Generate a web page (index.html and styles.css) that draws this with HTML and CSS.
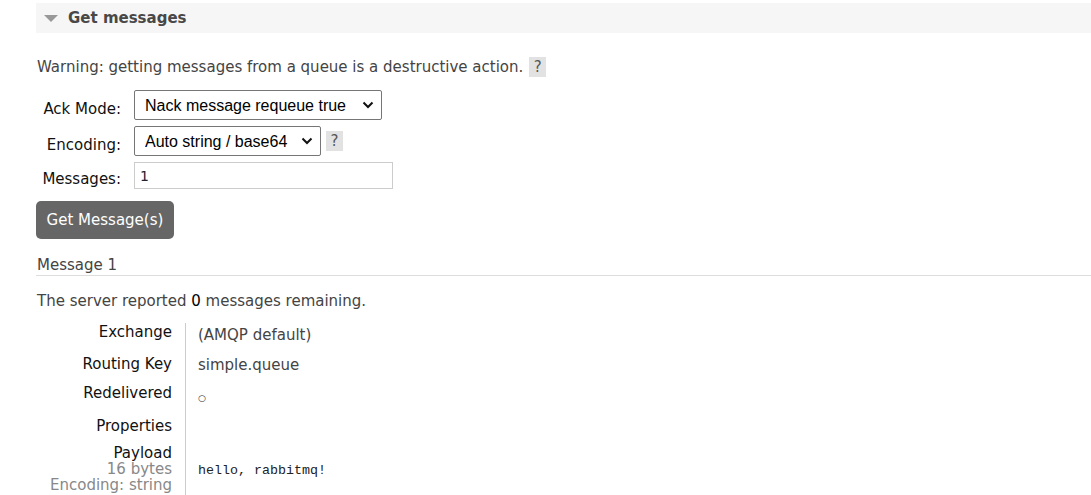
FILE: index.html
```html
<!DOCTYPE html>
<html>
<head>
<meta charset="utf-8">
<link rel="stylesheet" href="styles.css">
</head>
<body>
<div class="page">
  <div class="section-head">
    <span class="triangle"></span>
    <h2>Get messages</h2>
  </div>
  <div class="section-body">
    <p class="warning">Warning: getting messages from a queue is a destructive action. <span class="help">?</span></p>
    <div class="form">
      <label class="flabel">Ack Mode:</label>
      <div class="fctl">
        <span class="selwrap">
          <select class="sel sel-ack">
            <option>Nack message requeue true</option>
          </select>
          <svg class="chev" width="12" height="8" viewBox="0 0 12 8"><polyline points="1.5,1.5 6,6 10.5,1.5" fill="none" stroke="#111" stroke-width="2"/></svg>
        </span>
      </div>
      <label class="flabel">Encoding:</label>
      <div class="fctl">
        <span class="selwrap">
          <select class="sel sel-enc">
            <option>Auto string / base64</option>
          </select>
          <svg class="chev" width="12" height="8" viewBox="0 0 12 8"><polyline points="1.5,1.5 6,6 10.5,1.5" fill="none" stroke="#111" stroke-width="2"/></svg>
        </span>
        <span class="help">?</span>
      </div>
      <label class="flabel">Messages:</label>
      <div class="fctl">
        <input class="txt" type="text" value="1">
      </div>
    </div>
    <button class="btn">Get Message(s)</button>

    <div class="msg-title">Message 1</div>
    <p class="remaining">The server reported <span class="num">0</span> messages remaining.</p>

    <table class="facts">
      <tr class="r1"><th>Exchange</th><td>(AMQP default)</td></tr>
      <tr class="r2"><th>Routing Key</th><td>simple.queue</td></tr>
      <tr class="r3"><th>Redelivered</th><td><span class="circle">○</span></td></tr>
      <tr class="r4"><th>Properties</th><td></td></tr>
      <tr class="r5"><th>Payload<br><span class="sub">16 bytes</span><br><span class="sub">Encoding: string</span></th><td class="mid"><pre>hello, rabbitmq!</pre></td></tr>
    </table>
  </div>
</div>
</body>
</html>
```

FILE: styles.css
```css
html, body {
  margin: 0;
  padding: 0;
  background: #fff;
}
body {
  font-family: "DejaVu Sans", Verdana, sans-serif;
  font-size: 15px;
  color: #444;
  overflow: hidden;
}
.page {
  padding: 3px 0 0 36px;
}
.section-head {
  display: flex;
  align-items: center;
  height: 30px;
  background: #f6f6f6;
  padding-left: 8px;
}
.triangle {
  width: 0;
  height: 0;
  border-left: 7px solid transparent;
  border-right: 7px solid transparent;
  border-top: 7px solid #999;
  margin-right: 10px;
  margin-top: 1px;
}
.section-head h2 {
  margin: 0;
  font-size: 15px;
  font-weight: bold;
  color: #484848;
}
.section-body {
  padding-left: 1px;
}
.warning {
  margin: 24px 0 0 0;
  line-height: 20px;
  display: flex;
  align-items: center;
  gap: 6px;
}
.help {
  display: inline-block;
  background: #e2e2e2;
  color: #555;
  width: 17px;
  height: 20px;
  line-height: 20px;
  text-align: center;
  font-size: 15px;
}
.form {
  display: grid;
  grid-template-columns: 84px auto;
  column-gap: 13px;
  row-gap: 6px;
  margin-top: 13px;
  align-items: center;
}
.flabel {
  text-align: right;
  color: #111;
  padding-top: 7px;
}
.fctl {
  display: flex;
  align-items: center;
  gap: 5px;
}
.selwrap {
  position: relative;
  display: inline-block;
}
.chev {
  position: absolute;
  right: 8px;
  top: 11px;
  pointer-events: none;
}
.sel {
  appearance: none;
  -webkit-appearance: none;
  display: block;
  font-family: "Liberation Sans", Arial, sans-serif;
  font-size: 16px;
  color: #000;
  height: 30px;
  background: #fff;
  border: 1px solid #767676;
  border-radius: 2px;
  padding: 0 24px 0 10px;
  margin: 0;
}
.sel-ack { width: 248px; }
.sel-enc { width: 187px; }
.txt {
  width: 259px;
  height: 27px;
  box-sizing: border-box;
  border: 1px solid #ccc;
  font-family: "DejaVu Sans", Verdana, sans-serif;
  font-size: 14px;
  color: #223;
  padding: 0 5px;
  margin: 0;
}
.btn {
  margin-top: 12px;
  margin-left: -1px;
  display: block;
  width: 138px;
  height: 38px;
  background: #666;
  color: #fff;
  border: none;
  border-radius: 5px;
  font-family: "DejaVu Sans", Verdana, sans-serif;
  font-size: 15px;
}
.msg-title {
  margin-top: 17px;
  margin-left: -1px;
  padding-left: 1px;
  padding-bottom: 1px;
  border-bottom: 1px solid #ddd;
  line-height: 18px;
}
.remaining {
  margin: 16px 0 0 0;
  line-height: 18px;
}
.num { color: #000; }
.facts {
  border-collapse: collapse;
  margin-top: 13px;
}
.facts th {
  text-align: right;
  font-weight: normal;
  color: #111;
  vertical-align: top;
  padding: 0 13px 0 0;
  width: 135px;
  border-right: 1px solid #ccc;
  line-height: 16px;
}
.facts td {
  vertical-align: top;
  padding: 4px 13px 0 12px;
  line-height: 17px;
}
.facts .r1 { height: 32px; }
.facts .r2 { height: 29px; }
.facts .r3 { height: 33px; }
.facts .r4 { height: 28px; }
.facts .r1 th, .facts .r2 th, .facts .r3 th, .facts .r4 th { padding-top: 1px; }
.facts .r2 td { padding-top: 2px; }
.facts .r3 td { padding-top: 4px; }
.facts .r5 th { padding-bottom: 5px; }
.sub { color: #888; }
.circle {
  font-size: 9px;
  color: #333;
}
.facts td.mid {
  vertical-align: middle;
  padding-top: 0;
  padding-bottom: 3px;
}
pre {
  margin: 0;
  font-family: "Liberation Mono", "Courier New", monospace;
  font-size: 13.33px;
  color: #222;
}
```
